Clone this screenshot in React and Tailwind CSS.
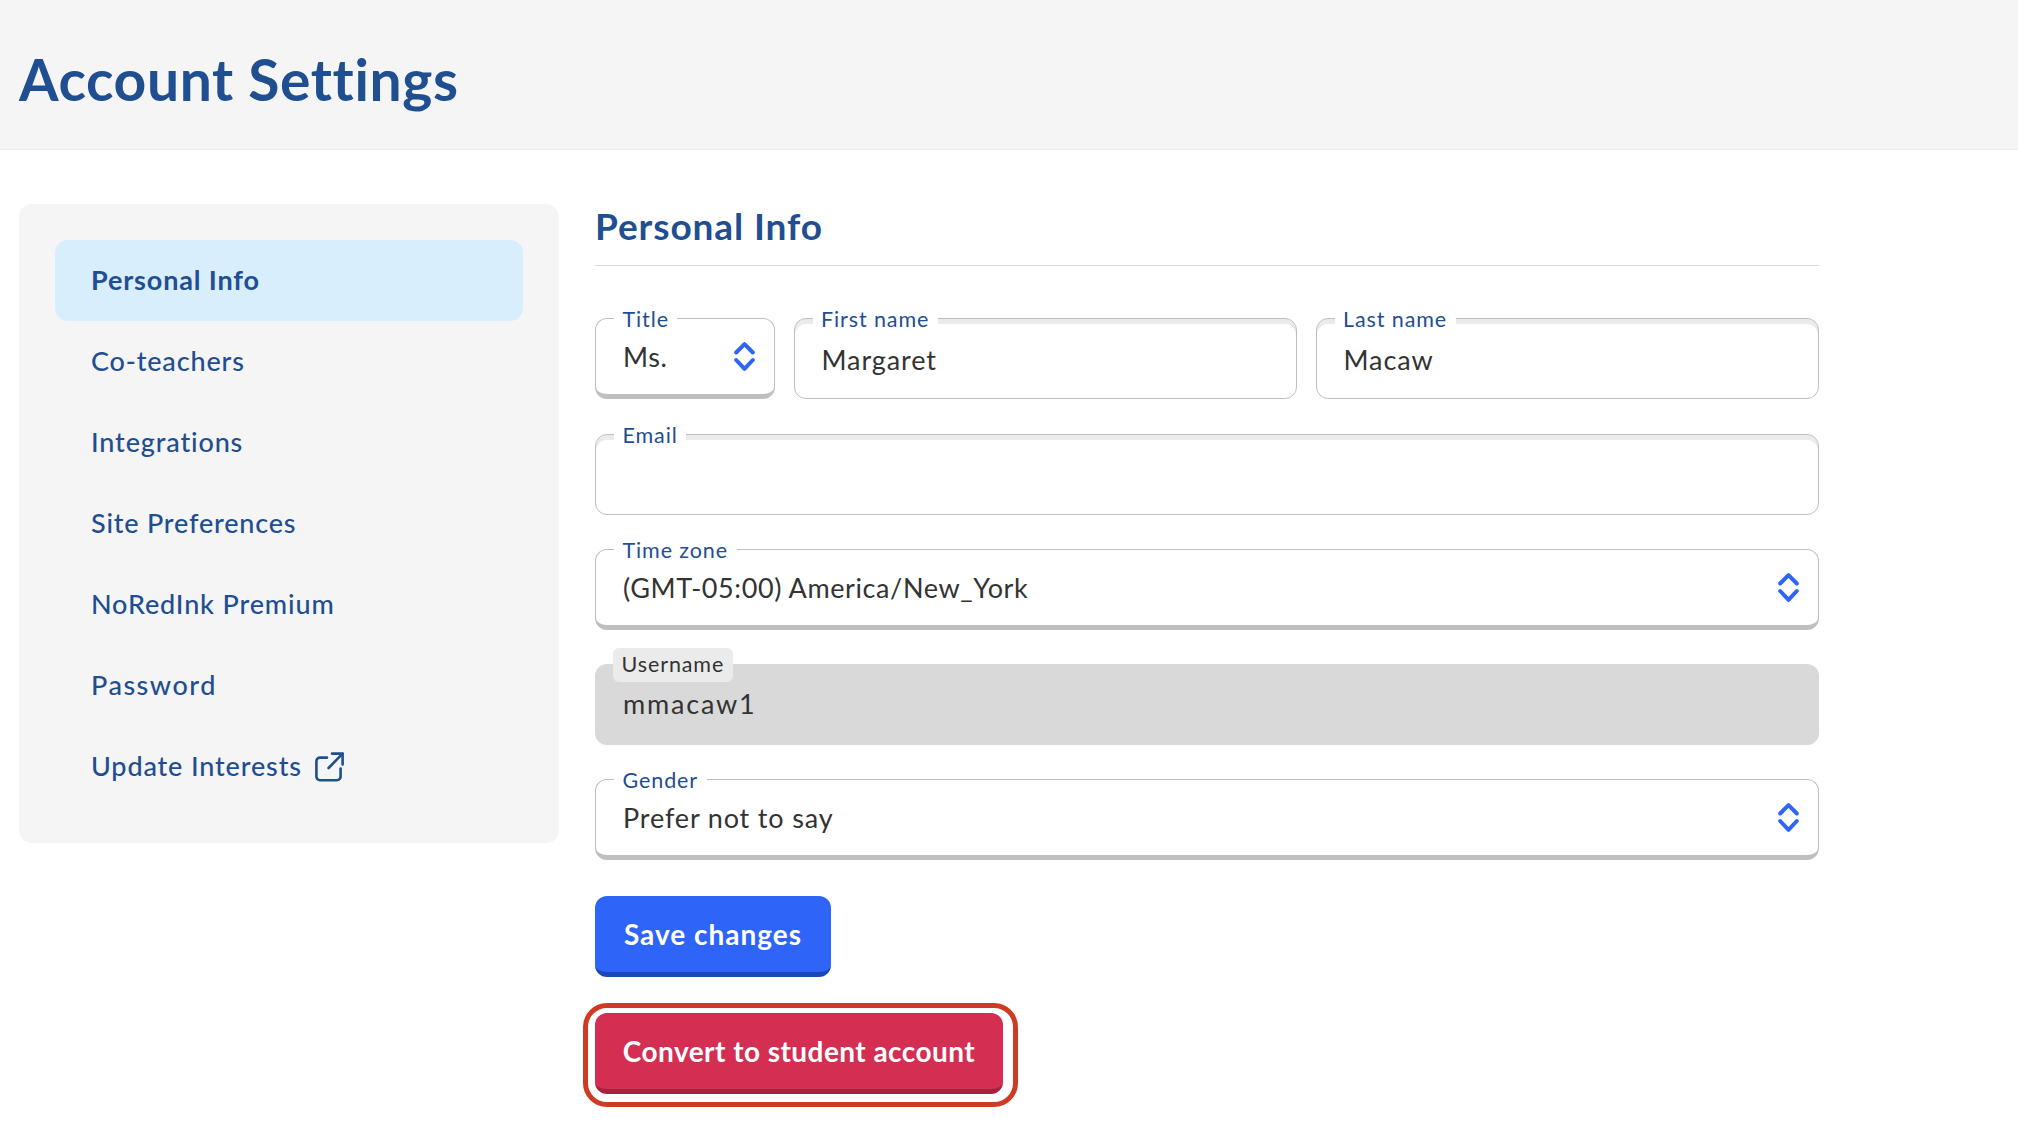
const FONT = "font-['Lato','Noto_Sans',sans-serif]";

function Chevrons({ className = "" }) {
  return (
    <svg viewBox="0 0 21 29" className={`w-[21px] h-[29px] shrink-0 ${className}`} fill="none" stroke="#2e64f8" strokeWidth="4" strokeLinecap="round" strokeLinejoin="round">
      <path d="M2.2 10.5 L10.5 2.2 L18.8 10.5" />
      <path d="M2.2 18 L10.5 26.8 L18.8 18" />
    </svg>
  );
}

function ExternalIcon() {
  return (
    <svg viewBox="0 0 29 30" className="w-[29px] h-[30px] ml-[13px]" fill="none" stroke="#1f4e91" strokeWidth="2.6" strokeLinecap="round" strokeLinejoin="round">
      <path d="M12 5.6 H5 A3.6 3.6 0 0 0 1.4 9.2 V24.6 A3.6 3.6 0 0 0 5 28.2 H22 A3.6 3.6 0 0 0 25.6 24.6 V16.5" />
      <path d="M13.6 16 L27.6 1.6" />
      <path d="M17 1.6 H27.6 V12.5" />
    </svg>
  );
}

function Label({ children, disabled }) {
  return (
    <span className={`absolute left-[18px] -top-[16px] h-[34px] px-[8.5px] flex items-center text-[21.5px] leading-none tracking-[0.9px] rounded-[6px] ${disabled ? "bg-[#ebebeb] text-[#333333]" : "bg-white text-[#1f4e91]"}`}>
      {children}
    </span>
  );
}

function TextField({ label, value, className = "" }) {
  return (
    <div className={`relative h-[81px] rounded-[12px] border border-[#bfbfbf] bg-white shadow-[inset_0_5px_0_0_#ebebeb] flex items-center pl-[27px] pt-[3px] text-[27px] text-[#333333] tracking-[0.9px] ${className}`}>
      <Label>{label}</Label>
      {value}
    </div>
  );
}

function SelectField({ label, value, className = "", valueClass = "tracking-[0.6px]" }) {
  return (
    <div className={`relative h-[81px] rounded-[12px] border border-[#bfbfbf] border-b-[5px] bg-white flex items-center justify-between pl-[27px] pr-[19px] text-[27px] text-[#333333] ${className}`}>
      <Label>{label}</Label>
      <span className={`pt-[1px] ${valueClass}`}>{value}</span>
      <Chevrons />
    </div>
  );
}

const NAV = [
  { label: "Personal Info", track: "tracking-[0.85px]" },
  { label: "Co-teachers", track: "tracking-[0.85px]" },
  { label: "Integrations", track: "tracking-[0.85px]" },
  { label: "Site Preferences", track: "tracking-[0.8px]" },
  { label: "NoRedInk Premium", track: "tracking-[0.85px]" },
  { label: "Password", track: "tracking-[1.5px]" },
];

export default function App() {
  return (
    <div className={`min-h-[1142px] bg-white ${FONT}`}>
      <header className="h-[150px] bg-[#f5f5f5] border-b border-[#ebebeb] flex items-center pl-[19px] pt-[9px]">
        <h1 className="text-[57px] leading-none font-bold text-[#1f4e91] tracking-[0.6px]">Account Settings</h1>
      </header>

      <div className="flex items-start pl-[19px] pt-[54px] gap-[36px]">
        <nav className="w-[540px] h-[639px] rounded-[13px] bg-[#f5f5f5] p-[36px]">
          {NAV.map((item, i) => (
            <a key={item.label} className={`h-[81px] pl-[36px] flex items-center text-[27px] text-[#1f4e91] rounded-[13px] ${item.track} ${i === 0 ? "bg-[#d9eefd] font-bold" : "font-medium"}`}>
              {item.label}
            </a>
          ))}
          <a className="h-[81px] pl-[36px] flex items-center text-[27px] tracking-[0.85px] text-[#1f4e91] font-medium">
            Update Interests
            <ExternalIcon />
          </a>
        </nav>

        <main className="w-[1224px]">
          <h2 className="h-[62px] border-b border-[#d9d9d9] text-[37px] leading-[44px] font-bold text-[#1f4e91] tracking-[0.9px]">
            Personal Info
          </h2>

          <div className="mt-[52px] flex flex-col gap-[34px]">
            <div className="flex gap-[19px] mb-[1px]">
              <SelectField label="Title" value="Ms." className="w-[179.5px]" />
              <TextField label="First name" value="Margaret" className="w-[503px]" />
              <TextField label="Last name" value="Macaw" className="w-[503.5px]" />
            </div>
            <TextField label="Email" value="" />
            <SelectField label="Time zone" value="(GMT-05:00) America/New_York" />
            <div className="relative h-[81px] rounded-[12px] bg-[#d9d9d9] flex items-center pl-[28px] text-[27px] text-[#333333] tracking-[1.8px]">
              <Label disabled>Username</Label>
              mmacaw1
            </div>
            <SelectField label="Gender" value="Prefer not to say" valueClass="tracking-[0.85px]" />
          </div>

          <button className="block mt-[36px] h-[81px] w-[236px] rounded-[12px] bg-[#2e64f8] border-b-[5px] border-[#1c47b8] text-white text-[28px] font-bold tracking-[1px]">
            Save changes
          </button>

          <div className="relative mt-[36px] w-[408px]">
            <button className="block h-[81px] w-[408px] rounded-[12px] bg-[#d42e53] border-b-[5px] border-[#a9203f] text-white text-[28px] font-bold tracking-[0.45px]">
              Convert to student account
            </button>
            <span className="absolute -left-[12px] -right-[15px] -top-[10px] -bottom-[13px] rounded-[24px] border-[5px] border-[#cf3a22]" />
          </div>
        </main>
      </div>
    </div>
  );
}
